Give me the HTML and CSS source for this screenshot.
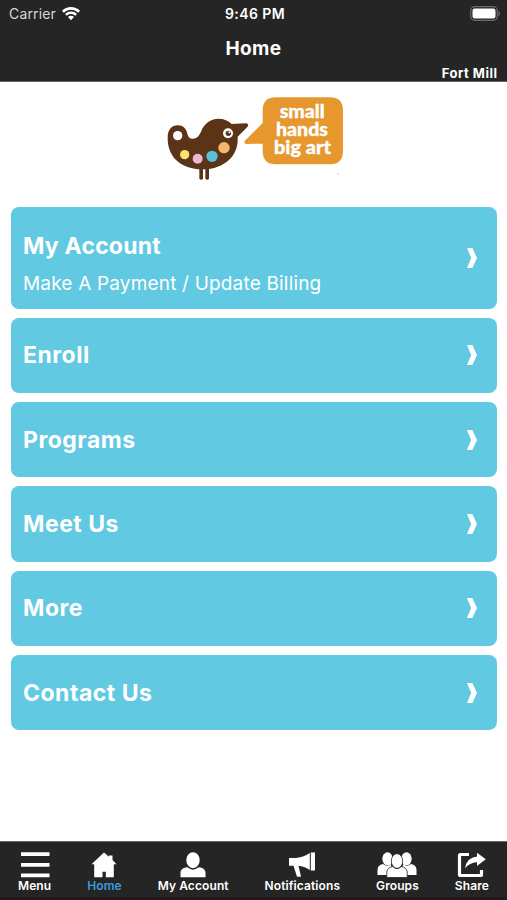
FILE: index.html
```html
<!DOCTYPE html>
<html lang="en">
<head>
  <meta charset="UTF-8">
  <meta name="viewport" content="width=device-width, initial-scale=1.0">
  <title>Home</title>
  <link rel="stylesheet" href="styles.css">
</head>
<body>
  <header class="header">
    <div class="status-bar">
      <div class="carrier">
        <span>Carrier</span>
        <svg class="wifi" viewBox="0 0 18 14" width="18" height="14">
          <path d="M0 3.8C5-1.2 13-1.2 18 3.8L16.2 5.7C12 1.7 6 1.7 1.8 5.7Z"/>
          <path d="M3 6.9C6.4 3.6 11.6 3.6 15 6.9L13.2 8.8C10.7 6.5 7.3 6.5 4.8 8.8Z"/>
          <path d="M6 10C7.8 8.4 10.2 8.4 12 10L9 13.3Z"/>
        </svg>
      </div>
      <div class="clock">9:46 PM</div>
      <svg class="battery" viewBox="0 0 31 15" width="31" height="15">
        <rect x=".7" y=".7" width="26.6" height="13.6" rx="4" fill="none" stroke="#6c6c6c" stroke-width="1.2"/>
        <rect x="2.5" y="2.5" width="23" height="10" rx="2.2" fill="#fff"/>
        <path d="M28.5 5C30.6 6 30.6 9 28.5 10Z" fill="#6c6c6c"/>
      </svg>
    </div>
    <h1 class="title">Home</h1>
    <div class="location">Fort Mill</div>
  </header>

  <main class="content">
    <svg class="logo" viewBox="0 0 600 315" width="200" height="105">
      <g fill="#5b3417">
        <path d="M38 158C38 134 50 121 68 121C84 121 94 131 97 146C100 157 105 161 114 161C127 161 133 151 139 138C148 115 166 102 190 101C207 101 220 107 230 117L273 115Q284 118 277 126L248 155C252 211 210 252 143 253C76 253 37 214 38 158Z"/>
        <path d="M133 246h11v35q-5 6-11 0zM151 246h11v35q-5 6-11 0z"/>
      </g>
      <circle cx="68" cy="152" r="14" fill="#fff"/>
      <circle cx="219" cy="145" r="15" fill="#fff"/>
      <circle cx="220" cy="145" r="8" fill="#5b3417"/>
      <circle cx="223" cy="142" r="3" fill="#fff"/>
      <circle cx="89" cy="209" r="14" fill="#fbe370"/>
      <circle cx="128" cy="221" r="15" fill="#efb7d3"/>
      <circle cx="171" cy="214" r="17" fill="#56bfdc"/>
      <circle cx="207" cy="188" r="17" fill="#f7b66f"/>
      <path d="M363 37H524Q564 37 564 77V198Q564 238 524 238H363Q323 238 323 198V176L273 177Q264 174 271 166L323 114V77Q323 37 363 37Z" fill="#e6982f"/>
      <g class="logo-text">
        <text x="374" y="100" textLength="135" lengthAdjust="spacingAndGlyphs">small</text>
        <text x="363" y="154" textLength="156" lengthAdjust="spacingAndGlyphs">hands</text>
        <text x="357" y="208" textLength="171" lengthAdjust="spacingAndGlyphs">big art</text>
      </g>
      <path d="M545 268l4-4 4 4z" fill="#bbb"/>
    </svg>

    <nav class="menu">
      <a class="menu-item tall">
        <div>
          <div class="menu-title">My Account</div>
          <div class="menu-text">Make A Payment / Update Billing</div>
        </div>
        <svg class="chevron" viewBox="0 0 10 20" width="10" height="20"><path d="M0 0H5.4L10 10L5.4 20H0L4.2 10Z"/></svg>
      </a>
      <a class="menu-item">
        <div class="menu-title">Enroll</div>
        <svg class="chevron" viewBox="0 0 10 20" width="10" height="20"><path d="M0 0H5.4L10 10L5.4 20H0L4.2 10Z"/></svg>
      </a>
      <a class="menu-item">
        <div class="menu-title">Programs</div>
        <svg class="chevron" viewBox="0 0 10 20" width="10" height="20"><path d="M0 0H5.4L10 10L5.4 20H0L4.2 10Z"/></svg>
      </a>
      <a class="menu-item">
        <div class="menu-title">Meet Us</div>
        <svg class="chevron" viewBox="0 0 10 20" width="10" height="20"><path d="M0 0H5.4L10 10L5.4 20H0L4.2 10Z"/></svg>
      </a>
      <a class="menu-item">
        <div class="menu-title">More</div>
        <svg class="chevron" viewBox="0 0 10 20" width="10" height="20"><path d="M0 0H5.4L10 10L5.4 20H0L4.2 10Z"/></svg>
      </a>
      <a class="menu-item">
        <div class="menu-title">Contact Us</div>
        <svg class="chevron" viewBox="0 0 10 20" width="10" height="20"><path d="M0 0H5.4L10 10L5.4 20H0L4.2 10Z"/></svg>
      </a>
    </nav>
  </main>

  <footer class="tab-bar">
    <a class="tab">
      <svg viewBox="0 0 30 26" width="30" height="26"><path d="M1 .3h28.5v3.8H1zM1 10.9h28.5v3.8H1zM1 21.5h28.5v3.8H1z"/></svg>
      <span>Menu</span>
    </a>
    <a class="tab active">
      <svg viewBox="0 0 26 26" width="26" height="26"><path d="M13 .5L18 4.8V3.5H21.500V8L25.500 12.200H22.800V25.300H14.800V19.700H11.500V25.300H3.200V12.200H.5Z"/></svg>
      <span>Home</span>
    </a>
    <a class="tab">
      <svg viewBox="0 0 26 26" width="26" height="26">
        <ellipse cx="13" cy="8.2" rx="6.7" ry="8"/>
        <path d="M.5 25.3V21C.5 17.5 3 15.8 7.5 15.3Q13 20 18.5 15.3C23 15.8 25.5 17.5 25.5 21V25.3Z"/>
      </svg>
      <span>My Account</span>
    </a>
    <a class="tab">
      <svg viewBox="0 0 26 26" width="26" height="26">
        <path d="M0 6H7C13 5.3 17 3.5 20.8 1V18C17 15.5 13 14 9.5 13.8L12 24.8H8L4.5 13.8H0ZM21.8 .5H26V18.5H21.8Z"/>
      </svg>
      <span>Notifications</span>
    </a>
    <a class="tab">
      <svg viewBox="0 0 40 26" width="40" height="26">
        <g>
          <ellipse cx="10.5" cy="6.8" rx="5.2" ry="6.5"/>
          <path d="M.5 23V18Q.5 13 6 12Q10 15.5 14 12L15 23Z"/>
          <ellipse cx="29.5" cy="6.8" rx="5.2" ry="6.5"/>
          <path d="M39.5 23V18Q39.5 13 34 12Q30 15.5 26 12L25 23Z"/>
        </g>
        <g stroke="#252525" stroke-width=".8">
          <path d="M9.8 25.5V20Q10.2 15.5 15.5 14.5Q20 18.5 24.5 14.5Q29.8 15.5 30.2 20V25.5Z"/>
          <ellipse cx="20" cy="9" rx="5.7" ry="7.3"/>
        </g>
      </svg>
      <span>Groups</span>
    </a>
    <a class="tab">
      <svg viewBox="0 0 30 26" width="30" height="26">
        <path d="M12 2.5H3.5Q2.5 2.5 2.5 3.5V22.5Q2.5 23.5 3.5 23.5H23.5Q24.5 23.5 24.5 22.5V18" fill="none" stroke="#fff" stroke-width="3.2"/>
        <path d="M20 .8L28.8 7.2L20 14V10.3Q12.5 10.5 8 16.5Q9.5 5.5 20 4.5Z"/>
      </svg>
      <span>Share</span>
    </a>
  </footer>
</body>
</html>
```

FILE: styles.css
```css
body {
  margin: 0;
  height: 900px;
  display: flex;
  flex-direction: column;
  overflow: hidden;
  background-color: #fff;
  color: #fff;
  font-family: Inter, "Liberation Sans", sans-serif;
}
.header {
  height: 82px;
  box-sizing: border-box;
  border-bottom: 1px solid #686868;
  background-color: #252525;
  flex-shrink: 0;
}
.status-bar {
  display: grid;
  grid-template-columns: 1fr auto 1fr;
  align-items: center;
  height: 27px;
  padding: 0 6px 0 9px;
  font-size: 14px;
}
.carrier {
  display: flex;
  align-items: center;
  gap: 6px;
  color: #d8d8d8;
  letter-spacing: 0.15px;
}
.wifi {
  fill: #fff;
}
.clock {
  font-weight: 600;
  letter-spacing: 0.4px;
}
.battery {
  justify-self: end;
}
.title {
  margin: 0;
  height: 38px;
  line-height: 44px;
  font-size: 19px;
  font-weight: 700;
  letter-spacing: 0.4px;
  text-align: center;
}
.location {
  padding-right: 9.5px;
  font-size: 13px;
  line-height: 16px;
  font-weight: 700;
  letter-spacing: 0.5px;
  text-align: right;
}

.content {
  flex: 1;
}
.logo {
  display: block;
  margin: 3px 0 0 155px;
}
.logo-text {
  fill: #fff;
  stroke: #fff;
  stroke-width: 1px;
  font-family: Lato, sans-serif;
  font-size: 56px;
  font-weight: 900;
}
.menu {
  display: flex;
  flex-direction: column;
  gap: 9px;
  margin: 17.3px 10px 0 11px;
}
.menu-item {
  display: flex;
  align-items: center;
  justify-content: space-between;
  box-sizing: border-box;
  height: 75.33px;
  padding: 0 20px 0 12px;
  border-radius: 8px;
  background-color: #61c9e2;
}
.menu-item.tall {
  height: 101.3px;
}
.menu-title {
  font-size: 23px;
  line-height: 30px;
  font-weight: 700;
  letter-spacing: 0.5px;
}
.menu-text {
  margin-top: 9px;
  font-size: 19px;
  line-height: 28px;
  letter-spacing: 0.18px;
}
.tall .menu-title {
  margin-top: 13px;
  letter-spacing: 0.2px;
}
.chevron {
  fill: #fff;
}

/* bottom tabs */
.tab-bar {
  display: flex;
  justify-content: space-between;
  box-sizing: border-box;
  height: 59px;
  padding: 10px 18px 0;
  border-top: 1px solid #686868;
  border-bottom: 3px solid #21191e;
  background-color: #252525;
  flex-shrink: 0;
}
.tab {
  display: flex;
  flex-direction: column;
  align-items: center;
  font-size: 12px;
  line-height: 16px;
  font-weight: 600;
  letter-spacing: 0.1px;
}
.tab svg {
  fill: #fff;
}
.tab.active {
  color: #3f9bdc;
}
```
